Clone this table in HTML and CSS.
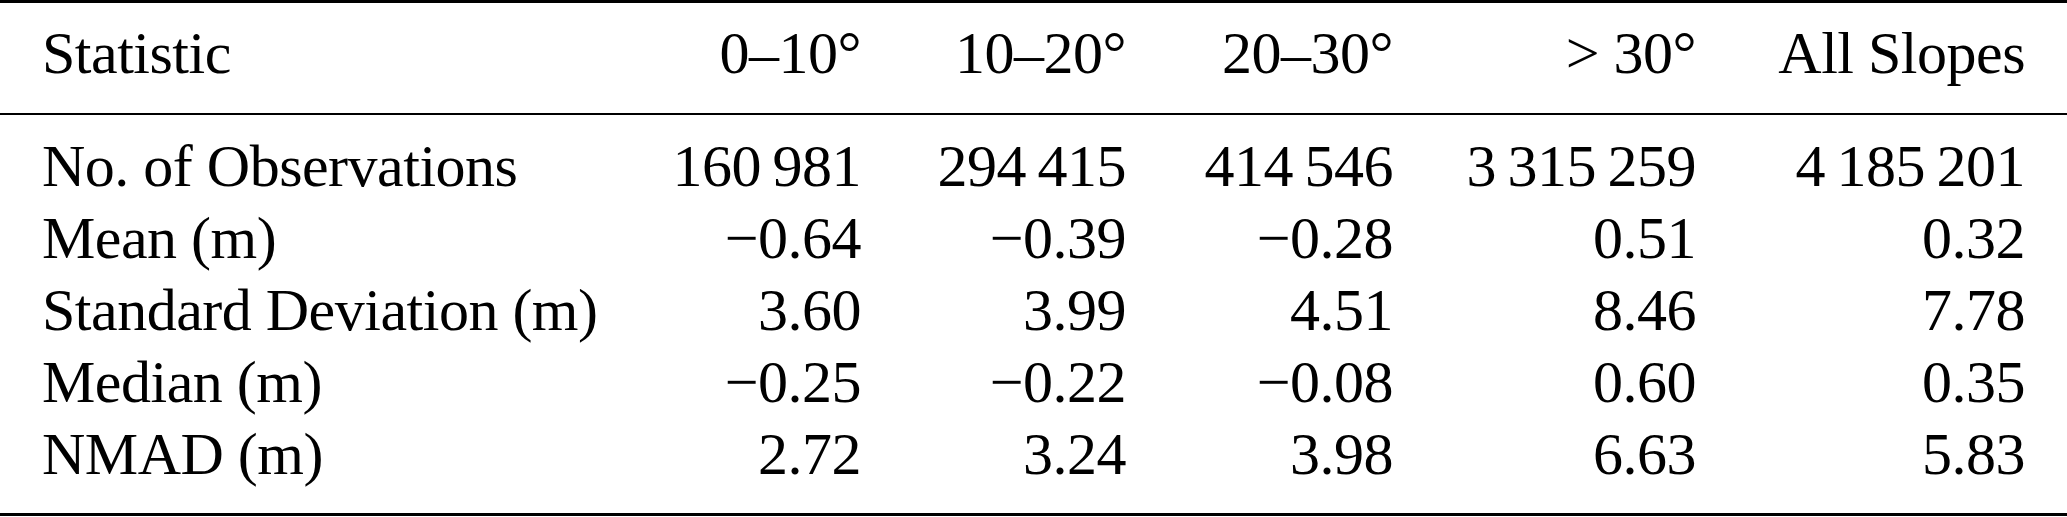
FILE: index.html
```html
<!DOCTYPE html>
<html lang="en">
<head>
<meta charset="utf-8">
<title>Statistics by slope</title>
<link rel="stylesheet" href="styles.css">
</head>
<body>
<div class="tbl">
  <div class="row head">
    <div class="c l">Statistic</div>
    <div class="c">0–10°</div>
    <div class="c">10–20°</div>
    <div class="c">20–30°</div>
    <div class="c">&gt; 30°</div>
    <div class="c">All Slopes</div>
  </div>
  <div class="body">
    <div class="row">
      <div class="c l">No. of Observations</div>
      <div class="c">160&thinsp;981</div>
      <div class="c">294&thinsp;415</div>
      <div class="c">414&thinsp;546</div>
      <div class="c">3&thinsp;315&thinsp;259</div>
      <div class="c">4&thinsp;185&thinsp;201</div>
    </div>
    <div class="row">
      <div class="c l">Mean (m)</div>
      <div class="c">−0.64</div>
      <div class="c">−0.39</div>
      <div class="c">−0.28</div>
      <div class="c">0.51</div>
      <div class="c">0.32</div>
    </div>
    <div class="row">
      <div class="c l">Standard Deviation (m)</div>
      <div class="c">3.60</div>
      <div class="c">3.99</div>
      <div class="c">4.51</div>
      <div class="c">8.46</div>
      <div class="c">7.78</div>
    </div>
    <div class="row">
      <div class="c l">Median (m)</div>
      <div class="c">−0.25</div>
      <div class="c">−0.22</div>
      <div class="c">−0.08</div>
      <div class="c">0.60</div>
      <div class="c">0.35</div>
    </div>
    <div class="row">
      <div class="c l">NMAD (m)</div>
      <div class="c">2.72</div>
      <div class="c">3.24</div>
      <div class="c">3.98</div>
      <div class="c">6.63</div>
      <div class="c">5.83</div>
    </div>
  </div>
</div>
</body>
</html>
```

FILE: styles.css
```css
html, body {
  margin: 0;
  padding: 0;
  background: #fff;
}

body {
  font-family: "Liberation Serif", "Times New Roman", serif;
  font-size: 60px;
  letter-spacing: -0.5px;
  color: #000;
}

.tbl {
  border-top: 3px solid #000;
  border-bottom: 3px solid #000;
}

.row {
  display: grid;
  grid-template-columns: 558px 261px 265px 267px 303px 329px;
  padding: 0 42px;
  line-height: 72px;
}

.head {
  padding-top: 14px;
  padding-bottom: 24px;
  border-bottom: 2px solid #000;
}

.body {
  padding-top: 15px;
  padding-bottom: 23px;
}

.c {
  text-align: right;
  white-space: nowrap;
}

.c.l {
  text-align: left;
}
```
